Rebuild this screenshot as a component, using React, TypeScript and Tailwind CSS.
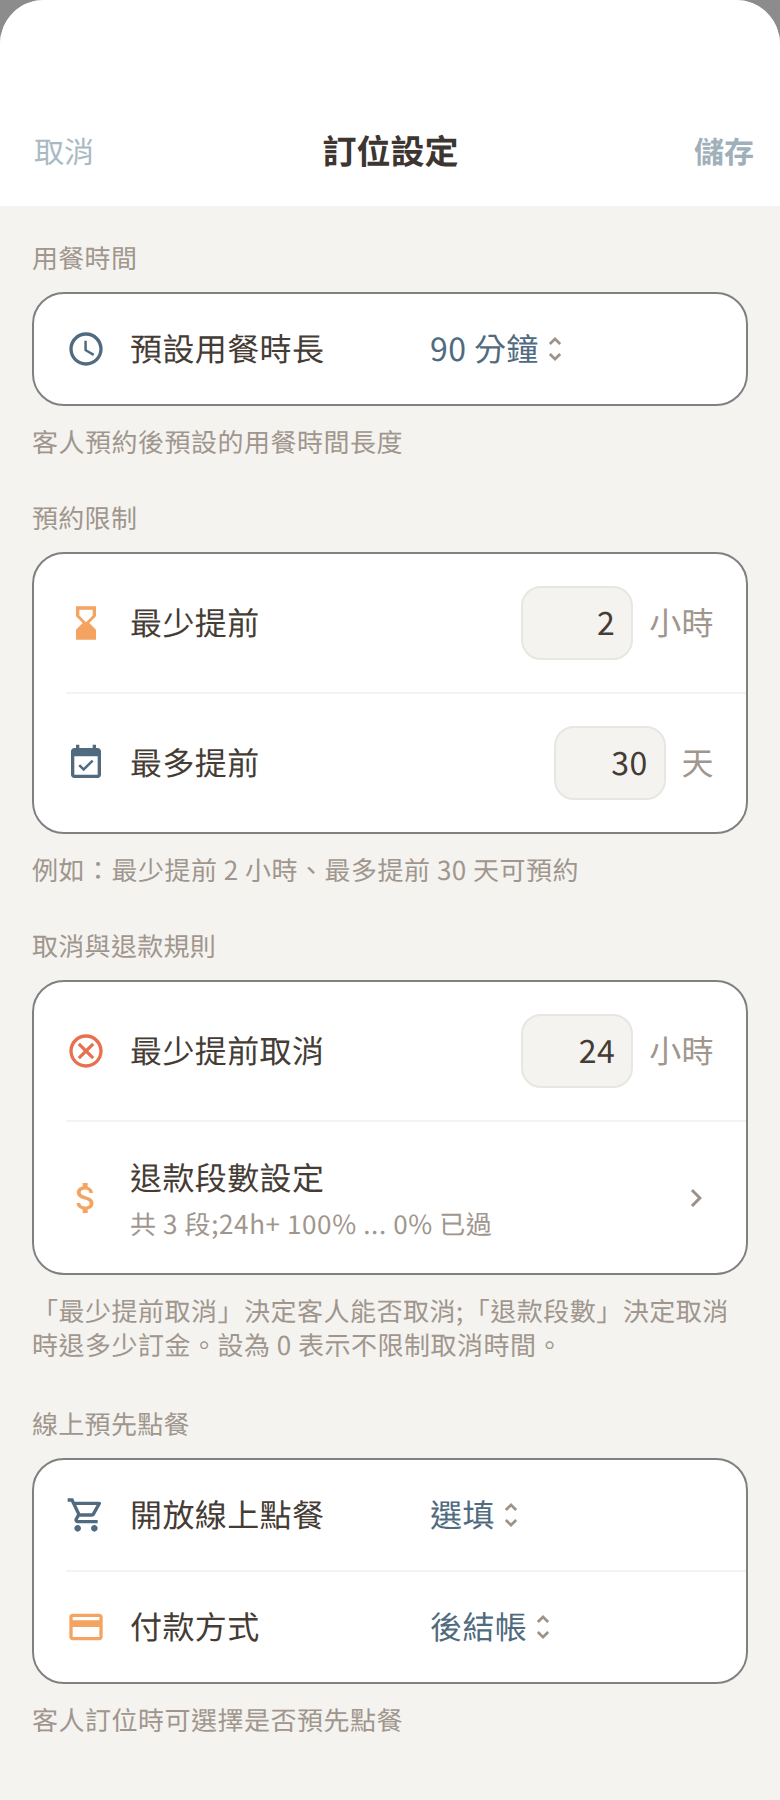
import type { ReactNode } from 'react';

const font = { fontFamily: '"Noto Sans CJK TC", "Noto Sans", sans-serif' };

const icons = {
  clock: 'M11.99 2C6.47 2 2 6.48 2 12s4.47 10 9.99 10C17.52 22 22 17.52 22 12S17.52 2 11.99 2zM12 20c-4.42 0-8-3.58-8-8s3.58-8 8-8 8 3.58 8 8-3.58 8-8 8zm.5-13H11v6l5.25 3.15.75-1.23-4.5-2.67z',
  hourglass: 'm18 22-.01-6L14 12l3.99-4.01L18 2H6v6l4 4-4 3.99V22h12zM8 7.5V4h8v3.5l-4 4-4-4z',
  calendar: 'M16.53 11.06 15.47 10l-4.88 4.88-2.12-2.12-1.06 1.06L10.59 17l5.94-5.94zM19 3h-1V1h-2v2H8V1H6v2H5c-1.11 0-1.99.9-1.99 2L3 19c0 1.1.89 2 2 2h14c1.1 0 2-.9 2-2V5c0-1.1-.9-2-2-2zm0 16H5V8h14v11z',
  cancel: 'm8.4 17 3.6-3.6 3.6 3.6 1.4-1.4-3.6-3.6 3.6-3.6-1.4-1.4-3.6 3.6-3.6-3.6L7 8.4l3.6 3.6L7 15.6 8.4 17zM12 2C6.47 2 2 6.47 2 12s4.47 10 10 10 10-4.47 10-10S17.53 2 12 2zm0 18c-4.41 0-8-3.59-8-8s3.59-8 8-8 8 3.59 8 8-3.59 8-8 8z',
  dollar: 'M11.8 10.9c-2.27-.59-3-1.2-3-2.15 0-1.09 1.01-1.85 2.7-1.85 1.78 0 2.44.85 2.5 2.1h2.21c-.07-1.72-1.12-3.3-3.21-3.81V3h-3v2.16c-1.94.42-3.5 1.68-3.5 3.61 0 2.31 1.91 3.46 4.7 4.13 2.5.6 3 1.48 3 2.41 0 .69-.49 1.79-2.7 1.79-2.06 0-2.87-.92-2.98-2.1h-2.2c.12 2.19 1.76 3.42 3.68 3.83V21h3v-2.15c1.95-.37 3.5-1.5 3.5-3.55 0-2.84-2.43-3.81-4.7-4.4z',
  cart: 'M15.55 13c.75 0 1.41-.41 1.75-1.03l3.58-6.49c.37-.66-.11-1.48-.87-1.48H5.21l-.94-2H1v2h2l3.6 7.59-1.35 2.44C4.52 15.37 5.48 17 7 17h12v-2H7l1.1-2h7.45zM6.16 6h12.15l-2.76 5H8.53L6.16 6zM7 18c-1.1 0-1.99.9-1.99 2S5.9 22 7 22s2-.9 2-2-.9-2-2-2zm10 0c-1.1 0-1.99.9-1.99 2s.89 2 1.99 2 2-.9 2-2-.9-2-2-2z',
  card: 'M20 4H4c-1.11 0-1.99.89-1.99 2L2 18c0 1.11.89 2 2 2h16c1.11 0 2-.89 2-2V6c0-1.11-.89-2-2-2zm0 14H4v-6h16v6zm0-10H4V6h16v2z',
  unfold: 'M12 5.83 15.17 9l1.41-1.41L12 3 7.41 7.59 8.83 9 12 5.83zm0 12.34L8.83 15l-1.41 1.41L12 21l4.59-4.59L15.17 15 12 18.17z',
  chevron: 'M10 6 8.59 7.41 13.17 12l-4.58 4.59L10 18l6-6z',
};

function Icon({ d, className }: { d: string; className: string }) {
  return (
    <svg viewBox="0 0 24 24" fill="currentColor" className={className}>
      <path d={d} />
    </svg>
  );
}

function Row({ icon, color, children }: { icon: string; color: string; children: ReactNode }) {
  return (
    <div className="flex items-center pl-[32px] pr-[32px] h-full">
      <Icon d={icon} className={`w-10 h-10 shrink-0 ${color}`} />
      <div className="ml-6 flex-1 flex items-center min-w-0">{children}</div>
    </div>
  );
}

function Divider() {
  return <div className="h-[2px] ml-[32px] bg-[#f4f3f0]" />;
}

function Picker({ label, value }: { label: string; value: string }) {
  return (
    <>
      <span className="w-[300px] shrink-0 pb-[2px] text-[32px] leading-[44px] tracking-[0.4px] text-[#453c35]">{label}</span>
      <span className="pb-[2px] text-[32px] leading-[44px] tracking-[0.4px] text-[#506b80]">{value}</span>
      <Icon d={icons.unfold} className="w-8 h-8 text-[#9c9289]" />
    </>
  );
}

function NumberField({ label, value, unit }: { label: string; value: string; unit: string }) {
  return (
    <>
      <span className="flex-1 pb-[2px] text-[32px] leading-[44px] tracking-[0.4px] text-[#453c35]">{label}</span>
      <div className="w-[112px] h-[74px] pr-[16px] pb-[2px] flex items-center justify-end rounded-[20px] border-2 border-[#e8e6e1] bg-[#f4f3f0] text-[32px] tracking-[0.4px] text-[#453c35]">
        {value}
      </div>
      <span className="ml-4 pb-[2px] text-[32px] leading-[44px] tracking-[0.4px] text-[#a0968d]">{unit}</span>
    </>
  );
}

function Section({ title, hint, className, children }: { title: string; hint: ReactNode; className: string; children: ReactNode }) {
  return (
    <section className={className}>
      <h2 className="px-[32px] text-[26px] leading-[36px] font-normal tracking-[0.3px] text-[#a0968d]">{title}</h2>
      <div className="mt-[16px] mx-[32px] rounded-[32px] border-2 border-[#808080] bg-white overflow-hidden">{children}</div>
      <div className="mt-[19px] px-[32px] text-[26px] leading-[34px] tracking-[0.5px] text-[#a0968d]">{hint}</div>
    </section>
  );
}

export default function App() {
  return (
    <div className="h-[1800px] w-[780px] overflow-hidden bg-[#8c8c8c] [text-rendering:geometricPrecision] antialiased" style={font}>
      <div className="h-full rounded-t-[44px] overflow-hidden bg-[#f4f3f0]">
        <header className="h-[206px] bg-white pt-[126px] pl-[34px] pr-[26px] flex items-start">
          <span className="flex-1 text-[30px] leading-[48px] text-[#a9bac4]">取消</span>
          <span className="mr-[7px] text-[34px] leading-[48px] font-semibold text-[#3d3530]">訂位設定</span>
          <span className="flex-1 text-right text-[30px] leading-[48px] font-semibold text-[#9fb0ba]">儲存</span>
        </header>

        <Section title="用餐時間" hint="客人預約後預設的用餐時間長度" className="pt-[34px]">
          <div className="h-[110px]">
            <Row icon={icons.clock} color="text-[#506b80]">
              <Picker label="預設用餐時長" value="90 分鐘" />
            </Row>
          </div>
        </Section>

        <Section title="預約限制" hint="例如：最少提前 2 小時、最多提前 30 天可預約" className="pt-[41px]">
          <div className="h-[138px]">
            <Row icon={icons.hourglass} color="text-[#f4a460]">
              <NumberField label="最少提前" value="2" unit="小時" />
            </Row>
          </div>
          <Divider />
          <div className="h-[138px]">
            <Row icon={icons.calendar} color="text-[#506b80]">
              <NumberField label="最多提前" value="30" unit="天" />
            </Row>
          </div>
        </Section>

        <Section
          title="取消與退款規則"
          hint={
            <>
              「最少提前取消」決定客人能否取消;「退款段數」決定取消
              <br />
              時退多少訂金。設為 0 表示不限制取消時間。
            </>
          }
          className="pt-[41px]"
        >
          <div className="h-[138px]">
            <Row icon={icons.cancel} color="text-[#e8704f]">
              <NumberField label="最少提前取消" value="24" unit="小時" />
            </Row>
          </div>
          <Divider />
          <div className="h-[151px]">
            <Row icon={icons.dollar} color="text-[#f4a460]">
              <div className="flex-1">
                <div className="text-[32px] leading-[44px] tracking-[0.4px] text-[#453c35]">退款段數設定</div>
                <div className="mt-[8px] text-[26px] leading-[34px] tracking-[0.62px] text-[#a0968d]">共 3 段;24h+ 100% ... 0% 已過</div>
              </div>
              <Icon d={icons.chevron} className="w-9 h-9 text-[#9c9289]" />
            </Row>
          </div>
        </Section>

        <Section title="線上預先點餐" hint="客人訂位時可選擇是否預先點餐" className="pt-[44px]">
          <div className="h-[110px]">
            <Row icon={icons.cart} color="text-[#506b80]">
              <Picker label="開放線上點餐" value="選填" />
            </Row>
          </div>
          <Divider />
          <div className="h-[110px]">
            <Row icon={icons.card} color="text-[#f4a460]">
              <Picker label="付款方式" value="後結帳" />
            </Row>
          </div>
        </Section>
      </div>
    </div>
  );
}
